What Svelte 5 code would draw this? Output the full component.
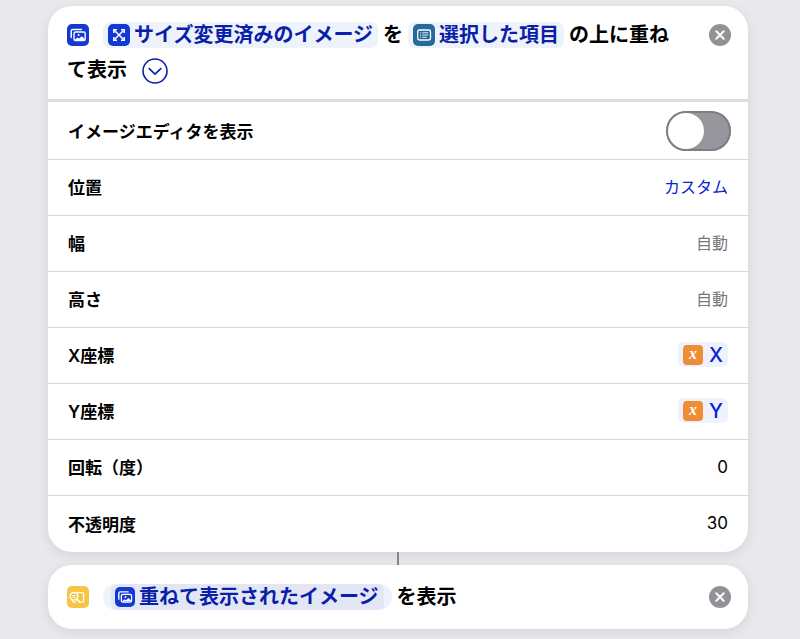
<script>
    let showEditor = $state(false);
    let position = $state('カスタム');
    let width = $state('');
    let height = $state('');
    let rotation = $state('0');
    let opacity = $state('30');
</script>

{#snippet photos()}
    <svg class="icon blue" viewBox="0 0 22 22" aria-hidden="true">
        <path d="M4.2 13.4 V7 Q4.2 5.4 5.8 5.4 H14.4" fill="none" stroke="#fff" stroke-width="1.5" stroke-linecap="round" />
        <rect x="7" y="8" width="11.2" height="8.6" rx="1.5" fill="none" stroke="#fff" stroke-width="1.4" />
        <path d="M7.5 16 L10.4 13.6 L12 14.6 L14.8 12.2 L17.6 14.8 V16 Z" fill="#fff" />
        <circle cx="11.6" cy="11" r="1" fill="#fff" />
    </svg>
{/snippet}

{#snippet closeIcon()}
    <svg viewBox="0 0 22 22" aria-hidden="true">
        <circle cx="11" cy="11" r="11" fill="#929196" />
        <path d="M7.3 7.3 L14.7 14.7 M14.7 7.3 L7.3 14.7" stroke="#fff" stroke-width="2" stroke-linecap="round" />
    </svg>
{/snippet}

{#snippet variable(name)}
    <button class="variable" aria-labelledby="label-{name} var-{name}">
        <span class="badge" aria-hidden="true">x</span><span id="var-{name}">{name}</span>
    </button>
{/snippet}

<main>
    <section class="card">
        <header class="top">
            <p class="sentence">{@render photos()}<button class="chip first"><svg class="icon blue" viewBox="0 0 22 22" aria-hidden="true">
                <path d="M6.5 6.5 L15.5 15.5 M15.5 6.5 L6.5 15.5" stroke="#fff" stroke-width="1.5" />
                <path d="M5.8 9 V5.8 H9 M13 5.8 H16.2 V9 M16.2 13 V16.2 H13 M9 16.2 H5.8 V13" fill="none" stroke="#fff" stroke-width="1.5" />
            </svg><span>サイズ変更済みのイメージ</span></button>を<button class="chip"><svg class="icon teal" viewBox="0 0 22 22" aria-hidden="true">
                <rect x="4.7" y="6" width="12.8" height="10" rx="1.8" fill="none" stroke="#fff" stroke-width="1.3" />
                <path d="M9.2 8.8 H15.2 M9.2 11 H15.2 M9.2 13.2 H13.8" stroke="#d5eaf5" stroke-width="1.1" />
                <path d="M7 8.8 H8.2 M7 11 H8.2 M7 13.2 H8.2" stroke="#d5eaf5" stroke-width="1.1" />
            </svg><span>選択した項目</span></button>の上に重ねて表示<button class="expand" aria-label="詳細を隠す"><svg viewBox="0 0 26 26" aria-hidden="true">
                <circle cx="13" cy="13" r="12" fill="none" stroke="#0a1fa8" stroke-width="1.6" />
                <path d="M7.2 10.6 L13 16.2 L18.8 10.6" fill="none" stroke="#0a1fa8" stroke-width="1.6" stroke-linecap="round" stroke-linejoin="round" />
            </svg></button></p>
            <button class="close" aria-label="削除">{@render closeIcon()}</button>
        </header>

        <div class="row">
            <label for="editor">イメージエディタを表示</label>
            <input id="editor" class="switch" type="checkbox" role="switch" bind:checked={showEditor} />
        </div>
        <div class="row">
            <label for="position">位置</label>
            <select id="position" bind:value={position}>
                <option>カスタム</option>
            </select>
        </div>
        <div class="row">
            <label for="width">幅</label>
            <input id="width" class="field" type="text" placeholder="自動" bind:value={width} />
        </div>
        <div class="row">
            <label for="height">高さ</label>
            <input id="height" class="field" type="text" placeholder="自動" bind:value={height} />
        </div>
        <div class="row">
            <span class="label" id="label-X">X座標</span>
            {@render variable('X')}
        </div>
        <div class="row">
            <span class="label" id="label-Y">Y座標</span>
            {@render variable('Y')}
        </div>
        <div class="row">
            <label for="rotation">回転（度）</label>
            <input id="rotation" class="field" type="text" inputmode="decimal" bind:value={rotation} />
        </div>
        <div class="row">
            <label for="opacity">不透明度</label>
            <input id="opacity" class="field" type="text" inputmode="decimal" bind:value={opacity} />
        </div>
    </section>

    <div class="connector"></div>

    <section class="card">
        <header>
            <p class="sentence"><svg class="icon yellow" viewBox="0 0 22 22" aria-hidden="true">
                <path d="M10 6.6 H15.4 Q16.6 6.6 16.6 7.8 V15 Q16.6 16.2 15.4 16.2 H13.5 M5.2 15 Q5.4 16.2 6.6 16.2 H8.5" fill="none" stroke="#fff" stroke-width="1.3" stroke-linecap="round" />
                <circle cx="7" cy="10.3" r="3.8" fill="none" stroke="#fff" stroke-width="1.4" />
                <path d="M9.8 13.1 L12.8 16.2" stroke="#fff" stroke-width="1.7" stroke-linecap="round" />
                <path d="M5.2 9.6 H8.8 M5.6 11.3 H8.2" stroke="#fff" stroke-width="0.9" />
            </svg><button class="chip first pill"><span class="inner">{@render photos()}<span>重ねて表示されたイメージ</span></span></button>を表示</p>
            <button class="close" aria-label="削除">{@render closeIcon()}</button>
        </header>
    </section>
</main>

<style>
    :global(body) {
        background: #e9e8ed;
    }

    main {
        padding: 6px 52px 10px 48px;
        font-family: Inter, "Noto Sans CJK JP", sans-serif;
        font-size: 17px;
        color: #000;
    }

    button, input, select {
        margin: 0;
        padding: 0;
        border: 0;
        background: none;
        font: inherit;
        color: inherit;
    }

    button {
        cursor: pointer;
    }

    .card {
        border-radius: 24px;
        background: #fff;
        box-shadow: 0 3px 12px rgba(0, 0, 0, 0.09);
    }

    header {
        display: flex;
        align-items: flex-start;
        gap: 24px;
        padding: 15px 17px 14px 19px;
    }

    .top {
        margin-bottom: 2px;
        padding: 12px 17px 11px 19px;
        border-bottom: 3px solid #dedee0;
    }

    .sentence {
        flex: 1;
        margin: 0;
        font-size: 20px;
        font-weight: 600;
        line-height: 35px;
    }

    .icon {
        width: 22px;
        height: 22px;
        border-radius: 5px;
        vertical-align: -4px;
    }

    .blue {
        background: #1338d4;
    }

    .teal {
        background: #266a9c;
    }

    .yellow {
        background: #f6c544;
    }

    .chip {
        margin: 0 5px;
        padding: 0 5px;
        border-radius: 7px;
        background: #eef2fb;
        color: #0a1fa8;
        line-height: 26px;
        white-space: nowrap;
    }

    .chip span {
        margin-left: 4px;
    }

    .chip.first {
        margin-left: 14px;
    }

    .pill {
        padding: 0 8px;
        border-radius: 13px;
    }

    .chip .inner {
        display: inline-block;
        margin: 0;
        padding: 0 5px 0 4px;
        border-radius: 6px;
        background: #e3e7f5;
    }

    .inner .icon {
        width: 20px;
        height: 20px;
        vertical-align: -3px;
    }

    .expand {
        width: 26px;
        height: 26px;
        margin-left: 15px;
        vertical-align: -7px;
    }

    .expand svg, .close svg {
        display: block;
    }

    .close {
        width: 22px;
        height: 22px;
        margin-top: 6px;
    }

    .row {
        display: flex;
        align-items: center;
        justify-content: space-between;
        box-sizing: border-box;
        height: 56px;
        padding: 0 20px 2px;
        border-bottom: 1px solid #d8d8da;
    }

    .row:last-child {
        border-bottom: 0;
    }

    label, .label {
        font-weight: 600;
    }

    .field {
        flex: 1;
        min-width: 0;
        text-align: right;
    }

    .field::placeholder {
        color: #77777a;
        font-size: 16px;
        opacity: 1;
    }

    select {
        appearance: none;
        color: #0a22d0;
        font-size: 16px;
        text-align: right;
    }

    .switch {
        appearance: none;
        box-sizing: border-box;
        width: 65px;
        height: 40px;
        margin-right: -3px;
        padding: 2px;
        border-radius: 20px;
        background: #97969c;
        box-shadow: inset 0 0 0 2px #7f7e84;
    }

    .switch::before {
        content: "";
        display: block;
        width: 36px;
        height: 36px;
        border-radius: 50%;
        background: #fff;
    }

    .switch:checked {
        background: #34c759;
    }

    .switch:checked::before {
        margin-left: auto;
    }

    .variable {
        display: flex;
        align-items: center;
        gap: 6px;
        height: 25px;
        padding: 0 5px;
        border-radius: 6px;
        background: #eff1fd;
        color: #0a22d0;
        font-size: 20px;
        font-weight: 500;
    }

    .badge {
        width: 20px;
        height: 20px;
        border-radius: 4px;
        background: #ee8d33;
        color: #fff;
        font: italic bold 16px/18px "Liberation Serif", serif;
        text-align: center;
    }

    .connector {
        width: 2px;
        height: 13px;
        margin: 0 auto;
        background: #87868b;
    }
</style>
